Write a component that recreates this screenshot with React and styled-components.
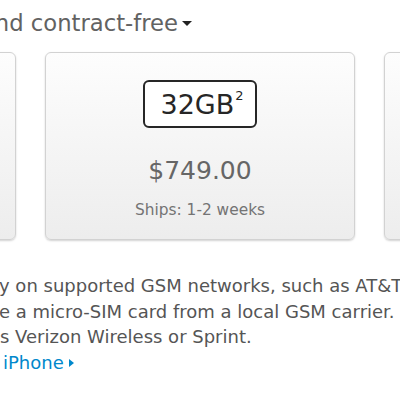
import styled, { createGlobalStyle } from "styled-components";

const GlobalStyle = createGlobalStyle`
  body {
    margin: 0;
    background: #fff;
    font-family: "DejaVu Sans", "Liberation Sans", sans-serif;
    overflow: hidden;
  }
`;

const Page = styled.div`
  width: 400px;
  height: 400px;
  overflow: hidden;
  background: #fff;
`;

const Heading = styled.h2`
  display: flex;
  justify-content: flex-end;
  align-items: center;
  width: 192px;
  margin: 0;
  padding-top: 7px;
  height: 31px;
  white-space: nowrap;
  font-size: 22.7px;
  font-weight: normal;
  color: #626262;
`;

const DownCaret = styled.span`
  display: inline-block;
  width: 0;
  height: 0;
  margin-left: 4px;
  margin-top: 2px;
  border-left: 5px solid transparent;
  border-right: 5px solid transparent;
  border-top: 5px solid #222;
`;

const CardRow = styled.div`
  display: flex;
  gap: 29px;
  margin-top: 14px;
  margin-left: -294px;
`;

const Card = styled.div`
  flex: 0 0 310px;
  height: 188px;
  box-sizing: border-box;
  display: flex;
  flex-direction: column;
  align-items: center;
  padding-top: 27px;
  border: 1px solid #d2d2d2;
  border-radius: 6px;
  background: linear-gradient(#fdfdfd, #ededed);
  box-shadow: 0 1px 2px rgba(0, 0, 0, 0.18);
`;

const Badge = styled.div`
  width: 114px;
  height: 48px;
  box-sizing: border-box;
  display: flex;
  align-items: center;
  justify-content: center;
  border: 2px solid #262626;
  border-radius: 6px;
  background: #fff;
  font-size: 27px;
  color: #262626;
  padding-left: 4px;

  sup {
    font-size: 13px;
    margin-left: 1px;
    align-self: flex-start;
    margin-top: 6px;
  }
`;

const Price = styled.div`
  margin-top: 28px;
  font-size: 25px;
  color: #666;
`;

const Ships = styled.div`
  margin-top: 16px;
  font-size: 15.4px;
  color: #747474;
`;

const Copy = styled.div`
  margin-top: 33px;
  font-size: 18px;
  line-height: 25.5px;
  color: #555;
`;

const Line = styled.div`
  white-space: nowrap;
  margin-left: ${(p) => p.$indent || 0}px;
`;

const MoreLink = styled.a`
  display: inline-flex;
  align-items: center;
  color: #0088cc;
  text-decoration: none;
`;

const RightCaret = styled.span`
  display: inline-block;
  width: 0;
  height: 0;
  margin-left: 5px;
  margin-top: 2px;
  border-top: 4px solid transparent;
  border-bottom: 4px solid transparent;
  border-left: 5px solid #0088cc;
`;

const models = [
  { size: "16GB", price: "$649.00" },
  { size: "32GB", price: "$749.00" },
  { size: "64GB", price: "$849.00" },
];

export default function App() {
  return (
    <Page>
      <GlobalStyle />
      <Heading>
        iPhone 4S unlocked and contract-free
        <DownCaret />
      </Heading>
      <CardRow>
        {models.map((m) => (
          <Card key={m.size}>
            <Badge>
              {m.size}
              <sup>2</sup>
            </Badge>
            <Price>{m.price}</Price>
            <Ships>Ships: 1-2 weeks</Ships>
          </Card>
        ))}
      </CardRow>
      <Copy>
        <Line $indent={-1}>y on supported GSM networks, such as AT&amp;T in the US.</Line>
        <Line $indent={-1}>e a micro-SIM card from a local GSM carrier.</Line>
        <Line $indent={0}>s Verizon Wireless or Sprint.</Line>
        <Line $indent={3}>
          <MoreLink href="#">
            iPhone
            <RightCaret />
          </MoreLink>
        </Line>
      </Copy>
    </Page>
  );
}
